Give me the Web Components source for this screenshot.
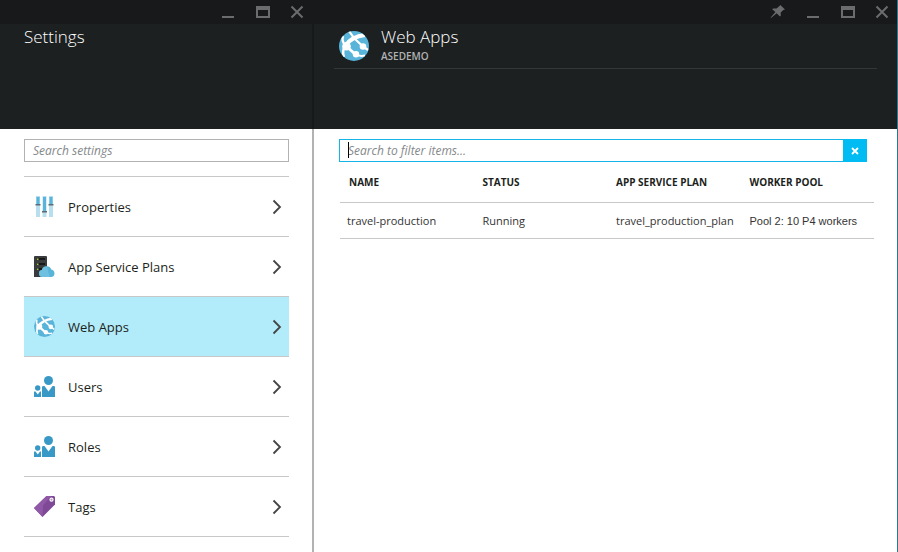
<!DOCTYPE html>
<html lang="en">
<head>
<meta charset="utf-8">
<title>Settings - Web Apps</title>
<style>
  html, body { height: 100%; }
  body { margin: 0; background: #fff; color: #1c1f20; font: 13px/20px "Open Sans", "Noto Sans", sans-serif; }
</style>
</head>
<body>
<portal-shell>
  <portal-blade class="menu" heading="Settings">
    <search-box label="Search settings"></search-box>
    <settings-list>
      <settings-item icon="sliders">Properties</settings-item>
      <settings-item icon="server">App Service Plans</settings-item>
      <settings-item icon="globe" selected>Web Apps</settings-item>
      <settings-item icon="people">Users</settings-item>
      <settings-item icon="people">Roles</settings-item>
      <settings-item icon="tag">Tags</settings-item>
    </settings-list>
  </portal-blade>
  <portal-blade class="detail" heading="Web Apps" subheading="ASEDEMO" icon="globe" pinnable>
    <search-box label="Search to filter items..." active></search-box>
    <app-table></app-table>
  </portal-blade>
</portal-shell>

<script>
const ICONS = {
  globe: `<svg viewBox="0 0 30 30"><defs><clipPath id="c"><circle cx="15" cy="15" r="15"/></clipPath></defs><circle cx="15" cy="15" r="15" fill="#59b4d9"/><g clip-path="url(#c)" fill="none" stroke="#fff"><path d="M6 15C10 9 17 5 26 4" stroke-width="3.800"/><path d="M10 0C12 3 14 6 16 8L24 15.500" stroke-width="2.200"/><path d="M7 15L16 23" stroke-width="3"/><path d="M16 23C19 25 22 25.500 26 24.500" stroke-width="2"/><path d="M24 15.500L29 19" stroke-width="2.200"/><path d="M6 14C3.500 11 3 8 4 5M6.500 14C4 18 3.500 22 5 26" stroke-width="2.400"/></g><circle cx="7.500" cy="15.200" r="4.300" fill="#fff"/><circle cx="24" cy="15.500" r="3.300" fill="#fff"/><circle cx="17" cy="23.300" r="3.200" fill="#fff"/></svg>`,
  sliders: `<svg viewBox="0 0 21 21"><g fill="#b8dff0"><path d="M2 0h4v21H2zM8.500 0h4v21h-4zM15 0h4v21h-4z"/></g><g fill="#59b4d9"><path d="M2.500 1h3v7h-3zM9 1h3v14H9zM15.500 1h3v7h-3z"/></g><g fill="#5d6b72"><path d="M1.500 8h5v1.400h-5zM8 15h5v1.400H8zM14.500 8h5v1.400h-5z"/></g></svg>`,
  server: `<svg viewBox="0 0 21 21"><path d="M1 0h11a1 1 0 0 1 1 1v20H0V1a1 1 0 0 1 1-1z" fill="#3a3b3d"/><path d="M3 2h8v2H3zM3 7h8v2H3zM3 12h8v2H3z" fill="#17181a"/><path d="M3 2.500h1.500V4H3zM3 7.500h1.500V9H3zM3 12.500h1.500V14H3z" fill="#a4cf3a"/><path d="M8.500 21a3.600 3.600 0 0 1-.7-7.100A5 5 0 0 1 17.300 13.600 3.800 3.800 0 0 1 17.700 21z" fill="#59b4d9"/><path d="M8.500 21a3.600 3.600 0 0 1-.7-7.100 5 5 0 0 1 5-3.500l3 10.600z" fill="#6fbfe0"/></svg>`,
  people: `<svg viewBox="0 0 21 21" fill="#3999c6"><circle cx="14.500" cy="4.500" r="4.500"/><circle cx="3.700" cy="12" r="2.700"/><path d="M9.300 10h1.200l4 5.500 4-5.500h1.200A1.300 1.300 0 0 1 21 11.300V21H8V11.300A1.300 1.300 0 0 1 9.300 10z"/><path d="M0 15.500h1.500l2.300 3 2.200-3h1V21H0z"/></svg>`,
  tag: `<svg viewBox="0 0 21 21"><path d="M12.500 0H20l1 1v7.500L8.500 21 0 12z" fill="#804998"/><path d="M12.500 0 0 12l8.500 9L9 9.500 17 0z" fill="#9059a7"/><circle cx="17.500" cy="3.700" r="2.100" fill="#fff"/><circle cx="17.500" cy="3.700" r="1.100" fill="#b79bc4"/></svg>`,
  chevron: `<svg viewBox="0 0 10 16"><path d="M1.500 1.500 8 8l-6.500 6.500" fill="none" stroke="#444" stroke-width="1.800"/></svg>`,
  pin: `<svg viewBox="0 0 20 20"><path d="M13.300 5 18 9.500l-1.700.4-2.600 2.700.1 3-.9.9-3.200-3.200L4 18l-.3-.4 4.700-5.600L5.200 9.200l.9-.8 3.400.1 2.700-2.300z" fill="#6b6c6e"/></svg>`,
  minimize: `<svg viewBox="0 0 20 20"><path d="M5 16h12v2H5z" fill="#6b6c6e"/></svg>`,
  maximize: `<svg viewBox="0 0 20 20"><path d="M4 6h14v12H4zM6 10v6h10v-6z" fill="#6b6c6e" fill-rule="evenodd"/></svg>`,
  close: `<svg viewBox="0 0 20 20"><path d="M4.500 6.500l11 11m0-11-11 11" fill="none" stroke="#6b6c6e" stroke-width="2"/></svg>`,
  clear: `<svg viewBox="0 0 8 8"><path d="M1 1l6 6M7 1 1 7" fill="none" stroke="#fff" stroke-width="1.800"/></svg>`
};

const render = (host, html) => { host.attachShadow({ mode: "open" }).innerHTML = html; };

customElements.define("ui-icon", class extends HTMLElement {
  connectedCallback() {
    if (this.shadowRoot) return;
    render(this, `<style>
      :host { display: block; flex: none; width: 21px; height: 21px; }
      svg { display: block; width: 100%; height: 100%; }
    </style>${ICONS[this.getAttribute("name")]}`);
  }
});

customElements.define("portal-shell", class extends HTMLElement {
  connectedCallback() {
    if (this.shadowRoot) return;
    render(this, `<style>
      :host { display: flex; min-height: 100vh; }
      ::slotted(.menu) { flex: 0 0 314px; --edge: 2px solid #b2b2b2; --over: -2px; --over-line: 2px solid #171a1b; --pad: 10px 23px 0 24px; --head-pad: 0 20px 0 24px; }
      ::slotted(.detail) { flex: 1; min-width: 0; --edge: 1px solid #2b7890; --over: 0; --over-line: 0; --pad: 10px 23px 0 25px; --head-pad: 0 20px; }
    </style><slot></slot>`);
  }
});

customElements.define("window-bar", class extends HTMLElement {
  connectedCallback() {
    if (this.shadowRoot) return;
    const names = ["minimize", "maximize", "close"];
    if (this.hasAttribute("pinnable")) names.unshift("pin");
    render(this, `<style>
      :host { display: flex; justify-content: flex-end; gap: 15px; height: 24px; padding-right: 5px; background: #18191b; }
      button { width: 20px; height: 20px; padding: 0; border: 0; background: none; cursor: pointer; }
      ui-icon { width: 20px; height: 20px; }
    </style>${names.map(n => `<button type="button" aria-label="${n}"><ui-icon name="${n}"></ui-icon></button>`).join("")}`);
  }
});

customElements.define("portal-blade", class extends HTMLElement {
  connectedCallback() {
    if (this.shadowRoot) return;
    const sub = this.getAttribute("subheading"), icon = this.getAttribute("icon");
    render(this, `<style>
      :host { display: flex; flex-direction: column; box-sizing: border-box; border-right: var(--edge); }
      .dark { margin-right: var(--over); border-right: var(--over-line); }
      header { height: 105px; padding: var(--head-pad); box-sizing: border-box; background: #1c2021; color: #fff; }
      .title { display: flex; gap: 12px; height: 44px; }
      .ruled { padding-left: 5px; border-bottom: 1px solid #333738; }
      .title ui-icon { width: 30px; height: 30px; margin-top: 7px; }
      h1 { margin: 0; font: 300 17px/25px "Open Sans", "Noto Sans", sans-serif; }
      p { margin: 0; font: 600 10px/14px "Open Sans", sans-serif; color: #b0b2b3; }
      main { padding: var(--pad); }
    </style>
    <div class="dark">
      <window-bar ${this.hasAttribute("pinnable") ? "pinnable" : ""}></window-bar>
      <header><div class="title ${sub ? "ruled" : ""}">
        ${icon ? `<ui-icon name="${icon}"></ui-icon>` : ""}
        <div><h1>${this.getAttribute("heading")}</h1>${sub ? `<p>${sub}</p>` : ""}</div>
      </div></header>
    </div>
    <main><slot></slot></main>`);
  }
});

customElements.define("search-box", class extends HTMLElement {
  connectedCallback() {
    if (this.shadowRoot) return;
    const active = this.hasAttribute("active"), label = this.getAttribute("label");
    render(this, `<style>
      :host { display: flex; position: relative; height: 23px; margin-bottom: 14px; }
      :host([active]) { margin: 0 7px 0 0; }
      input { flex: 1; min-width: 0; box-sizing: border-box; margin: 0; padding: 0 8px; border: 1px solid #b2b2b2; border-radius: 0; outline: 0; background: #fff; font: italic 12px/20px "Open Sans", sans-serif; color: #1c1f20; }
      :host([active]) input { border-color: #14b4e8; border-right: 0; }
      input::placeholder { color: #85888a; opacity: 1; }
      button { display: grid; place-items: center; width: 24px; padding: 0; border: 0; background: #00bcf2; }
      button ui-icon { width: 8px; height: 8px; }
      .caret { position: absolute; left: 9px; top: 3px; width: 1px; height: 16px; background: #000; }
    </style>
    <input type="text" aria-label="${label}" placeholder="${label}">
    ${active ? `<span class="caret"></span><button type="button" aria-label="Clear"><ui-icon name="clear"></ui-icon></button>` : ""}`);
  }
});

customElements.define("settings-list", class extends HTMLElement {
  connectedCallback() {
    if (this.shadowRoot) return;
    render(this, `<style>
      :host { display: block; }
      nav { border-top: 1px solid #c8c8c8; }
    </style><nav aria-label="Settings"><slot></slot></nav>`);
  }
});

customElements.define("settings-item", class extends HTMLElement {
  connectedCallback() {
    if (this.shadowRoot) return;
    render(this, `<style>
      :host { display: block; }
      a { display: flex; align-items: center; gap: 13px; height: 59px; padding: 0 7px 0 10px; border-bottom: 1px solid #c8c8c8; color: #1c1f20; font: 13px/20px "Open Sans", sans-serif; text-decoration: none; }
      :host([selected]) a { background: #b2ebfa; }
      .text { flex: 1; }
      .arrow { width: 10px; height: 16px; }
    </style><a href="#"><ui-icon name="${this.getAttribute("icon")}"></ui-icon><span class="text"><slot></slot></span><ui-icon class="arrow" name="chevron"></ui-icon></a>`);
  }
});

customElements.define("app-table", class extends HTMLElement {
  connectedCallback() {
    if (this.shadowRoot) return;
    render(this, `<style>
      :host { display: block; padding-left: 1px; }
      table { width: 100%; table-layout: fixed; border-collapse: separate; border-spacing: 0; }
      th, td { padding: 0 0 0 9px; border-bottom: 1px solid #c8c8c8; text-align: left; white-space: nowrap; }
      th { height: 40px; font: 700 10px/16px "Open Sans", sans-serif; }
      td { height: 35px; font: 11px/18px "Open Sans", sans-serif; color: #333; }
      td:first-child { padding-left: 7px; }
      td:last-child { font: 11px/18px "Liberation Sans", sans-serif; }
    </style>
    <table>
      <thead><tr><th scope="col">NAME</th><th scope="col">STATUS</th><th scope="col">APP SERVICE PLAN</th><th scope="col">WORKER POOL</th></tr></thead>
      <tbody><tr><td>travel-production</td><td>Running</td><td>travel_production_plan</td><td>Pool 2: 10 P4 workers</td></tr></tbody>
    </table>`);
  }
});
</script>
</body>
</html>
